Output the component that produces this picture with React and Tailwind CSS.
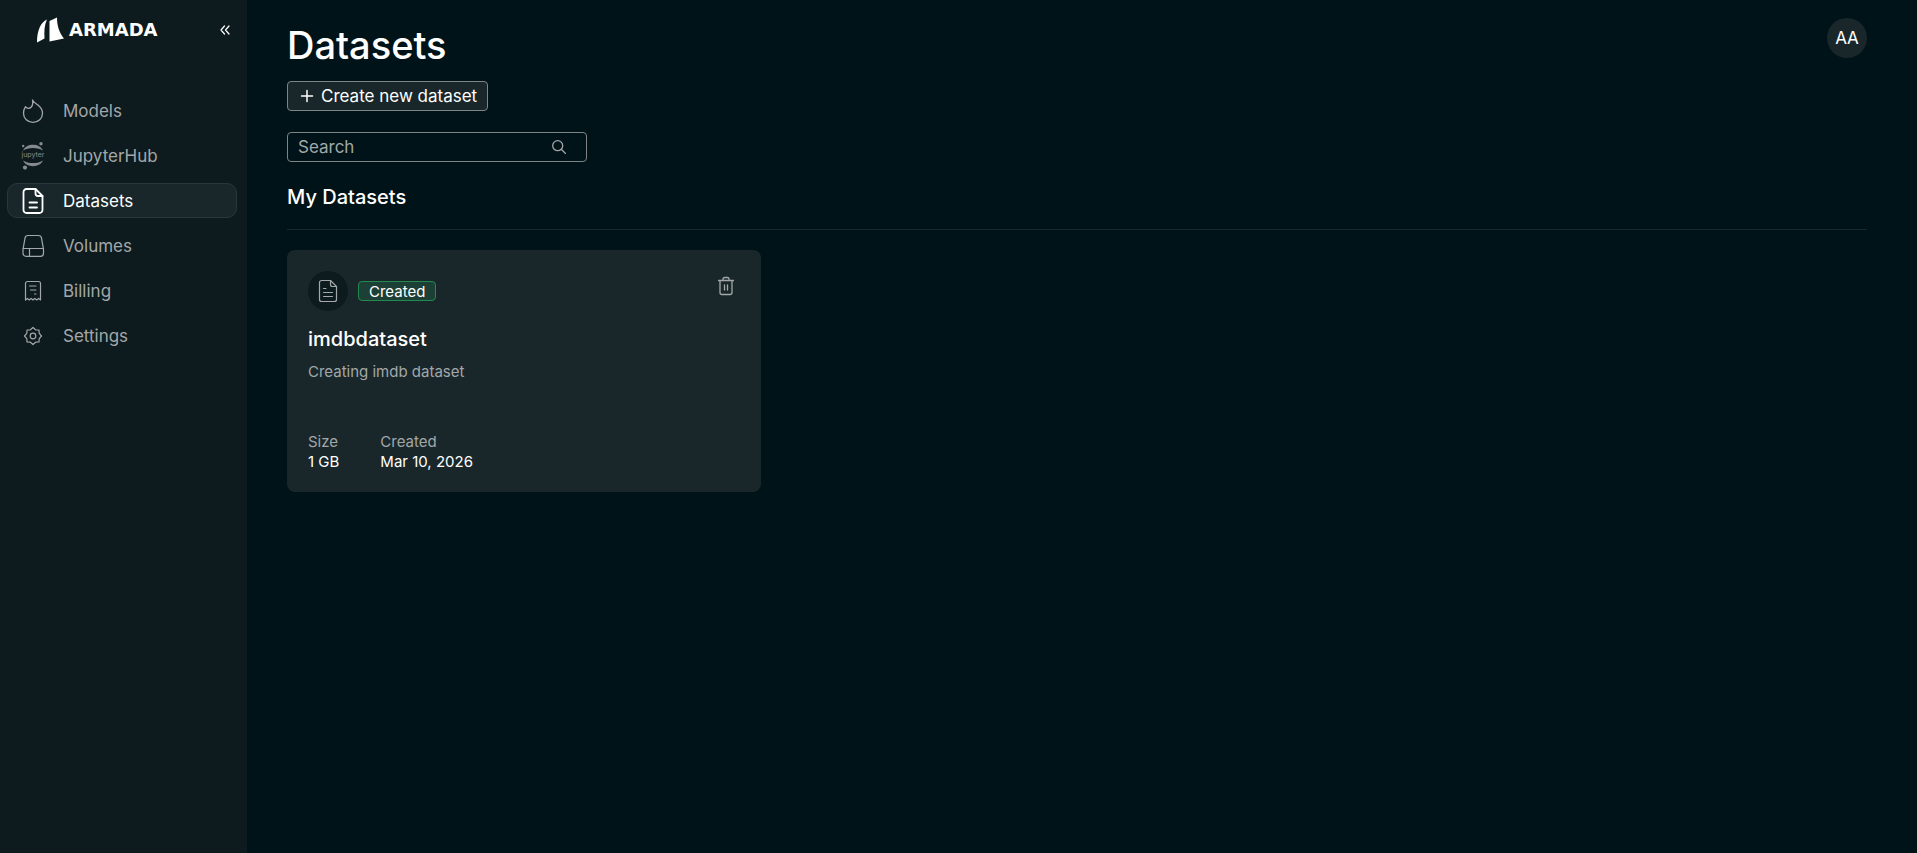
const iconProps = {
  fill: "none",
  stroke: "currentColor",
  strokeLinecap: "round",
  strokeLinejoin: "round",
  "aria-hidden": true,
};

const FlameIcon = () => (
  <svg width="24" height="24" viewBox="0 0 24 24" strokeWidth="1.3" {...iconProps}>
    <path d="M11.5 1c.6 3.3.1 5.600-1.200 7C8.600 9.800 6.200 9.800 4.400 7.800 3 9.800 2.500 12 2.500 14.200c0 5.200 4.200 9.100 9.500 9.100s9.500-3.900 9.500-9.100c0-3.200-1.400-5.400-3.800-7.400C15.400 4.900 12.700 3.600 11.500 1Z" />
  </svg>
);

const JupyterIcon = () => (
  <svg width="24" height="28" viewBox="0 0 24 28" fill="currentColor" className="overflow-visible opacity-80" aria-hidden="true">
    <path d="M2 8.500C3.800 4.800 7.500 2.800 12 2.800s8.200 2 10 5.700C19.500 6.800 16 5.900 12 5.900S4.500 6.800 2 8.500Z" />
    <path d="M2 18.500c1.800 3.700 5.500 5.700 10 5.700s8.200-2 10-5.700c-2.500 1.700-6 2.600-10 2.600s-7.500-.9-10-2.600Z" />
    <circle cx="20" cy="1.800" r="1.700" />
    <circle cx="2.200" cy="4" r="1.200" />
    <circle cx="4" cy="25.600" r="2.100" />
    <text x="12" y="15" textAnchor="middle" fontSize="7">jupyter</text>
  </svg>
);

const FileIcon = () => (
  <svg width="24" height="26" viewBox="0 0 24 26" strokeWidth="1.8" {...iconProps}>
    <path d="M14.500 1H5.500a3 3 0 0 0-3 3v18a3 3 0 0 0 3 3h13a3 3 0 0 0 3-3V8Z" />
    <path d="M14.500 1v4.500A2.500 2.500 0 0 0 17 8h4.500M8.500 14.500h7.500M8.500 19.500h7.500" />
  </svg>
);

const VolumeIcon = () => (
  <svg width="24" height="24" viewBox="0 0 24 24" strokeWidth="1.2" {...iconProps}>
    <path d="M7 1.500h10.500a3 3 0 0 1 3 2.600L22.500 15.300v4a3 3 0 0 1-3 3H5a3 3 0 0 1-3-3v-4L4 4.100a3 3 0 0 1 3-2.600Z" />
    <path d="M2.200 14.500h20.200M8.500 14.500v7.800" />
  </svg>
);

const BillingIcon = () => (
  <svg width="24" height="24" viewBox="0 0 24 24" strokeWidth="1.2" {...iconProps}>
    <path d="M4.500 21V4.500a2 2 0 0 1 2-2h11a2 2 0 0 1 2 2V21l-1.900-1.600-1.900 1.600-1.900-1.600L12 21l-1.900-1.600L8.200 21l-1.800-1.600Z" />
    <path d="M8.500 7h6.500M9.500 11h5.500M13.500 15h1.500" />
  </svg>
);

const SettingsIcon = () => (
  <svg width="24" height="24" viewBox="0 0 24 24" strokeWidth="1.2" {...iconProps}>
    <path d="M12 3.500 14.600 5.800 18 6 18.200 9.400 20.500 12 18.200 14.600 18 18 14.600 18.200 12 20.500 9.400 18.200 6 18 5.800 14.600 3.500 12 5.800 9.400 6 6 9.400 5.800Z" />
    <circle cx="12" cy="12" r="2.8" />
  </svg>
);

const DocumentIcon = () => (
  <svg width="20" height="24" viewBox="0 0 20 24" strokeWidth="1.2" {...iconProps}>
    <path d="M12.500 1.500h-9a2 2 0 0 0-2 2v17a2 2 0 0 0 2 2h13a2 2 0 0 0 2-2v-13Z" />
    <path d="M12.500 1.500v4a2 2 0 0 0 2 2h4M5.500 9.500h2.500M5.500 13.500h9M5.500 17.500h9" />
  </svg>
);

const TrashIcon = () => (
  <svg width="16" height="20" viewBox="0 0 16 20" strokeWidth="1.3" {...iconProps}>
    <path d="M.5 4.500h15M2 4.500v12a2 2 0 0 0 2 2h8a2 2 0 0 0 2-2v-12M5 4.500V3a1.500 1.500 0 0 1 1.500-1.500h3A1.500 1.500 0 0 1 11 3v1.500M6.500 9v5M9.500 9v5" />
  </svg>
);

const navItems = [
  { label: "Models", icon: FlameIcon },
  { label: "JupyterHub", icon: JupyterIcon },
  { label: "Datasets", icon: FileIcon, active: true },
  { label: "Volumes", icon: VolumeIcon },
  { label: "Billing", icon: BillingIcon },
  { label: "Settings", icon: SettingsIcon },
];

const datasets = [
  {
    name: "imdbdataset",
    description: "Creating imdb dataset",
    status: "Created",
    size: "1 GB",
    created: "Mar 10, 2026",
  },
];

function Sidebar() {
  return (
    <aside className="w-[247px] shrink-0 bg-[#0d1b1f]">
      <div className="flex h-[60px] items-center justify-between pl-9 pr-[17px]">
        <a href="#" className="flex items-center gap-1 text-white">
          <svg width="29" height="26" viewBox="0 0 29 26" fill="currentColor" aria-hidden="true">
            <path d="M11 2.500C5 5 1 13 1 25.500l7.500-4C8 14 8.500 7.500 11 2.500Z" />
            <path d="M13.500 4 21 .5c0 8 2 15 7 21L13.500 24.500Z" />
          </svg>
          <span className="font-['DejaVu_Sans',sans-serif] text-[18px] leading-6 font-bold">ARMADA</span>
        </a>
        <button type="button" aria-label="Collapse sidebar" className="text-white">
          <svg width="10" height="10" viewBox="0 0 10 10" strokeWidth="1.2" {...iconProps}>
            <path d="M4.500 1 1 5l3.500 4M9 1 5.500 5 9 9" />
          </svg>
        </button>
      </div>
      <nav className="mt-[33px] flex flex-col gap-[10px] pl-[7px] pr-[10px]">
        {navItems.map(({ label, icon: Icon, active }) => (
          <a
            key={label}
            href="#"
            className={
              active
                ? "flex h-[35px] items-center gap-[18px] rounded-[10px] border border-[#2b3638] bg-[#19272b] px-[13px] text-[17px] text-white"
                : "flex h-[35px] items-center gap-[18px] rounded-[10px] border border-transparent px-[13px] text-[17px] text-[#a3a7a8]"
            }
          >
            <span className="flex w-6 justify-center">
              <Icon />
            </span>
            <span className="pt-0.5">{label}</span>
          </a>
        ))}
      </nav>
    </aside>
  );
}

function DatasetCard({ dataset }) {
  return (
    <article className="w-[30%] rounded-lg bg-[#19272b] px-[21px] pt-[21px] pb-5">
      <div className="flex items-center">
        <span className="mr-[10px] flex size-10 items-center justify-center rounded-full bg-[#0d1b1f] text-[#a3a7a8]">
          <DocumentIcon />
        </span>
        <span className="flex h-5 items-center rounded-[4px] border border-[#22894f] bg-[#1c4036] px-[10px] pt-0.5 text-[15px] text-white">
          {dataset.status}
        </span>
        <button type="button" aria-label="Delete dataset" className="mr-1.5 mb-[10px] ml-auto text-[#a3a7a8]">
          <TrashIcon />
        </button>
      </div>
      <h3 className="mt-4 text-[20px] leading-6 font-medium">{dataset.name}</h3>
      <p className="mt-[11px] text-[15px] leading-5 text-[#a3a7a8]">{dataset.description}</p>
      <dl className="mt-[50px] flex gap-[41px] text-[15px] leading-5">
        <div>
          <dt className="text-[#a3a7a8]">Size</dt>
          <dd>{dataset.size}</dd>
        </div>
        <div>
          <dt className="text-[#a3a7a8]">Created</dt>
          <dd>{dataset.created}</dd>
        </div>
      </dl>
    </article>
  );
}

function App() {
  return (
    <div className="flex min-h-screen bg-[#001318] font-['Inter',sans-serif] text-white">
      <Sidebar />
      <main className="flex-1 pt-[18px] pr-[50px] pl-10">
        <div className="flex items-start justify-between">
          <h1 className="text-[38px] leading-[54px] font-medium">Datasets</h1>
          <button type="button" className="size-10 rounded-full bg-[#19272b] pt-0.5 text-[17px]">
            AA
          </button>
        </div>
        <button
          type="button"
          className="mt-[9px] flex h-[30px] items-center gap-1.5 rounded-[4px] border border-[#7f8486] bg-[#19272b] px-[10px] text-[17px]"
        >
          <svg width="17" height="16" viewBox="0 0 17 16" strokeWidth="1.5" {...iconProps}>
            <path d="M9 2.500v11M3.500 8h11" />
          </svg>
          <span className="pt-0.5">Create new dataset</span>
        </button>
        <label className="mt-[21px] flex h-[30px] w-[300px] items-center rounded-[4px] border border-[#7f8486] pr-5 pl-[10px]">
          <input
            type="text"
            placeholder="Search"
            aria-label="Search datasets"
            className="min-w-0 flex-1 bg-transparent pt-0.5 text-[17px] outline-none placeholder:text-[#a3a7a8]"
          />
          <svg width="14" height="14" viewBox="0 0 14 14" strokeWidth="1.3" className="text-[#a3a7a8]" {...iconProps}>
            <circle cx="5.7" cy="5.7" r="5" />
            <path d="m9.300 9.300 4.200 4.200" />
          </svg>
        </label>
        <h2 className="mt-[22px] border-b border-[#19272b] pb-[19px] text-[20px] leading-[26px] font-medium">My Datasets</h2>
        <section className="mt-5 flex flex-wrap gap-5">
          {datasets.map((dataset) => (
            <DatasetCard key={dataset.name} dataset={dataset} />
          ))}
        </section>
      </main>
    </div>
  );
}

export default App;
